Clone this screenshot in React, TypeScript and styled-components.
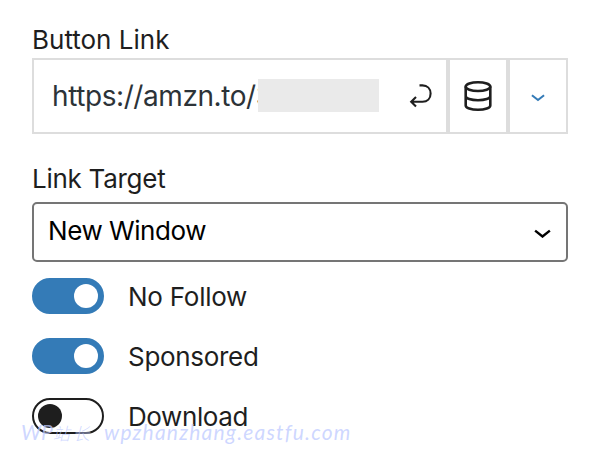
import React from "react";
import styled, { createGlobalStyle } from "styled-components";

const GlobalStyle = createGlobalStyle`
  * { box-sizing: border-box; }
  body { margin: 0; background: #fff; }
`;

const Panel = styled.main`
  position: relative;
  display: flex;
  flex-direction: column;
  width: 600px;
  height: 464px;
  padding: 22px 32px 0;
  overflow: hidden;
  background: #fff;
  color: #1e1e1e;
  font-family: Inter, "Liberation Sans", sans-serif;
  font-size: 26px;
`;

const Label = styled.div<{ $spacing: number }>`
  height: 36px;
  line-height: 36px;
  letter-spacing: ${(p) => p.$spacing}px;
  white-space: nowrap;
`;

const LinkGroup = styled.div`
  display: grid;
  grid-template-columns: 416px 60px 60px;
  height: 76px;
  margin-bottom: 27px;
`;

const Cell = styled.div`
  display: flex;
  align-items: center;
  justify-content: center;
  border: 2px solid #ddd;
`;

const UrlCell = styled(Cell)`
  justify-content: flex-start;
  padding: 0 13px 0 18px;
  color: #2c3338;
`;

const Url = styled.span`
  width: 206px;
  overflow: hidden;
  font-size: 28px;
  line-height: 36px;
  letter-spacing: -0.42px;
  white-space: nowrap;
`;

const Redaction = styled.span`
  width: 121px;
  height: 33px;
  margin: 0 auto 1px 0;
  background: #eaeaea;
`;

const SelectBox = styled.div`
  display: flex;
  align-items: center;
  justify-content: space-between;
  height: 60px;
  margin: 5px 0 16px;
  padding: 0 15px 0 14px;
  border: 2px solid #757575;
  border-radius: 5px;
  color: #000;
`;

const SelectValue = styled.span`
  padding-bottom: 3px;
  letter-spacing: -0.45px;
`;

const ToggleRow = styled.div`
  display: flex;
  align-items: center;
  gap: 24px;
  height: 36px;
  margin-bottom: 24px;
`;

const Track = styled.div<{ $on: boolean }>`
  display: flex;
  align-items: center;
  justify-content: ${(p) => (p.$on ? "flex-end" : "flex-start")};
  width: 72px;
  height: 36px;
  padding: 0 4px;
  border: 2px solid ${(p) => (p.$on ? "#347bb7" : "#1e1e1e")};
  border-radius: 18px;
  background: ${(p) => (p.$on ? "#347bb7" : "#fff")};
`;

const Knob = styled.div<{ $on: boolean }>`
  width: 24px;
  height: 24px;
  border-radius: 50%;
  background: ${(p) => (p.$on ? "#fff" : "#1e1e1e")};
`;

const ToggleLabel = styled(Label)`
  padding-top: 1px;
`;

const Watermark = styled.div`
  position: absolute;
  left: 21px;
  top: 418px;
  display: flex;
  gap: 12px;
  color: rgba(190, 202, 255, 0.75);
  font: italic 21px/28px Lato, "Noto Sans CJK SC", sans-serif;
  white-space: nowrap;
`;

const Brand = styled.span`
  width: 71px;
`;

const Han = styled.span`
  font-size: 17px;
  font-weight: 300;
  letter-spacing: 3px;
`;

const Domain = styled.span`
  letter-spacing: 1.2px;
`;

const toggles = [
  { label: "No Follow", on: true, spacing: -0.25 },
  { label: "Sponsored", on: true, spacing: -0.3 },
  { label: "Download", on: false, spacing: -0.4 },
];

const ReturnIcon = () => (
  <svg width="24" height="26" viewBox="0 0 24 26" fill="none" stroke="#1e1e1e" strokeWidth="2.1">
    <path d="M10.5 2.4H13.5C18.3 2.4 21.6 5.7 21.6 10.6S18.3 18.8 13.5 18.8H2.5M7 14.1L2.2 18.8L7 23.6" />
  </svg>
);

const DatabaseIcon = () => (
  <svg width="28" height="32" viewBox="0 0 28 32" fill="none" stroke="#1e1e1e" strokeWidth="2.6">
    <ellipse cx="14" cy="6.6" rx="12.3" ry="4.4" />
    <path d="M1.7 6.6V25.4C1.7 27.9 7 29.8 14 29.8S26.3 27.9 26.3 25.4V6.6M1.7 15.9C1.7 18.4 7 20.2 14 20.2S26.3 18.4 26.3 15.9" />
  </svg>
);

const Chevron = ({ color, size }: { color: string; size: number }) => (
  <svg width={size} height={size / 2 + 4} viewBox="0 -3 18 13" fill="none" stroke={color} strokeWidth="2.6">
    <path d="M1.2 1.8L9 8L16.8 1.8" />
  </svg>
);

export default function App() {
  return (
    <>
      <GlobalStyle />
      <Panel>
        <Label $spacing={0}>Button Link</Label>
        <LinkGroup>
          <UrlCell>
            <Url>https://amzn.to/3</Url>
            <Redaction />
            <ReturnIcon />
          </UrlCell>
          <Cell><DatabaseIcon /></Cell>
          <Cell><Chevron color="#347bb7" size={14} /></Cell>
        </LinkGroup>
        <Label $spacing={-0.27}>Link Target</Label>
        <SelectBox>
          <SelectValue>New Window</SelectValue>
          <Chevron color="#000" size={17} />
        </SelectBox>
        {toggles.map((t) => (
          <ToggleRow key={t.label}>
            <Track $on={t.on}><Knob $on={t.on} /></Track>
            <ToggleLabel $spacing={t.spacing}>{t.label}</ToggleLabel>
          </ToggleRow>
        ))}
        <Watermark>
          <Brand>WP<Han>站长</Han></Brand>
          <Domain>wpzhanzhang.eastfu.com</Domain>
        </Watermark>
      </Panel>
    </>
  );
}
